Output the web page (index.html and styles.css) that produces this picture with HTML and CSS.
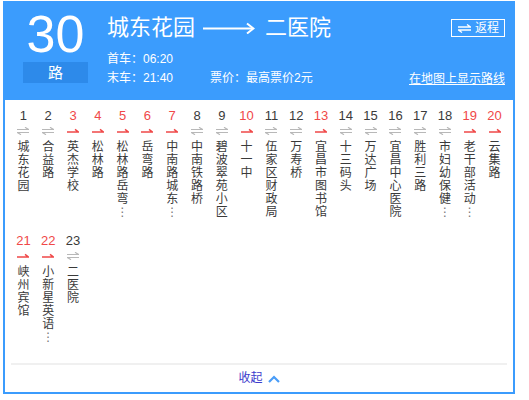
FILE: index.html
```html
<!DOCTYPE html>
<html lang="zh-CN">
<head>
<meta charset="utf-8">
<title>30路</title>
<link rel="stylesheet" href="styles.css">
</head>
<body>
<div class="card">
  <div class="header">
    <div class="route-num">
      <div class="num">30</div>
      <div class="lu">路</div>
    </div>
    <div class="route-info">
      <div class="title">
        <span>城东花园</span>
        <svg class="long-arrow" width="52" height="12" viewBox="0 0 52 12"><path d="M0 6.5H50" stroke="#fff" stroke-width="2"/><path d="M44 1.5L50.5 6.5L44 11.5" fill="none" stroke="#fff" stroke-width="2"/></svg>
        <span>二医院</span>
      </div>
      <div class="info-line">首车：06:20</div>
      <div class="info-line">
        <span class="first-col">末车：21:40</span>
        <span>票价：最高票价2元</span>
      </div>
    </div>
    <div class="route-actions">
      <a class="back-btn" href="#">
        <svg width="13" height="9" viewBox="0 0 13 9"><path d="M0 3H12.5L9 0.5" fill="none" stroke="#fff" stroke-width="1.3"/><path d="M13 6H0.5L4 8.5" fill="none" stroke="#fff" stroke-width="1.3"/></svg>
        <span>返程</span>
      </a>
      <a class="map-link" href="#">在地图上显示路线</a>
    </div>
  </div>

  <div class="stops">
    <div class="stop"><div class="no">1</div><svg class="ar" width="12" height="8" viewBox="0 0 12 8"><path d="M0 2.5H11.5L8 0.3M12 5.5H0.5L4 7.7" fill="none" stroke="#b8b8b8" stroke-width="1.2"/></svg><div class="nm">城东花园</div></div>
    <div class="stop"><div class="no">2</div><svg class="ar" width="12" height="8" viewBox="0 0 12 8"><path d="M0 2.5H11.5L8 0.3M12 5.5H0.5L4 7.7" fill="none" stroke="#b8b8b8" stroke-width="1.2"/></svg><div class="nm">合益路</div></div>
    <div class="stop red"><div class="no">3</div><svg class="ar" width="12" height="8" viewBox="0 0 12 8"><path d="M0 5H11.5L8 2.3" fill="none" stroke="#f04848" stroke-width="1.5"/></svg><div class="nm">英杰学校</div></div>
    <div class="stop red"><div class="no">4</div><svg class="ar" width="12" height="8" viewBox="0 0 12 8"><path d="M0 5H11.5L8 2.3" fill="none" stroke="#f04848" stroke-width="1.5"/></svg><div class="nm">松林路</div></div>
    <div class="stop red"><div class="no">5</div><svg class="ar" width="12" height="8" viewBox="0 0 12 8"><path d="M0 5H11.5L8 2.3" fill="none" stroke="#f04848" stroke-width="1.5"/></svg><div class="nm">松林路岳弯<span class="ell">⋮</span></div></div>
    <div class="stop red"><div class="no">6</div><svg class="ar" width="12" height="8" viewBox="0 0 12 8"><path d="M0 5H11.5L8 2.3" fill="none" stroke="#f04848" stroke-width="1.5"/></svg><div class="nm">岳弯路</div></div>
    <div class="stop red"><div class="no">7</div><svg class="ar" width="12" height="8" viewBox="0 0 12 8"><path d="M0 5H11.5L8 2.3" fill="none" stroke="#f04848" stroke-width="1.5"/></svg><div class="nm">中南路城东<span class="ell">⋮</span></div></div>
    <div class="stop"><div class="no">8</div><svg class="ar" width="12" height="8" viewBox="0 0 12 8"><path d="M0 2.5H11.5L8 0.3M12 5.5H0.5L4 7.7" fill="none" stroke="#b8b8b8" stroke-width="1.2"/></svg><div class="nm">中南铁路桥</div></div>
    <div class="stop"><div class="no">9</div><svg class="ar" width="12" height="8" viewBox="0 0 12 8"><path d="M0 2.5H11.5L8 0.3M12 5.5H0.5L4 7.7" fill="none" stroke="#b8b8b8" stroke-width="1.2"/></svg><div class="nm">碧波翠苑小区</div></div>
    <div class="stop red"><div class="no">10</div><svg class="ar" width="12" height="8" viewBox="0 0 12 8"><path d="M0 5H11.5L8 2.3" fill="none" stroke="#f04848" stroke-width="1.5"/></svg><div class="nm">十一中</div></div>
    <div class="stop"><div class="no">11</div><svg class="ar" width="12" height="8" viewBox="0 0 12 8"><path d="M0 2.5H11.5L8 0.3M12 5.5H0.5L4 7.7" fill="none" stroke="#b8b8b8" stroke-width="1.2"/></svg><div class="nm">伍家区财政局</div></div>
    <div class="stop"><div class="no">12</div><svg class="ar" width="12" height="8" viewBox="0 0 12 8"><path d="M0 2.5H11.5L8 0.3M12 5.5H0.5L4 7.7" fill="none" stroke="#b8b8b8" stroke-width="1.2"/></svg><div class="nm">万寿桥</div></div>
    <div class="stop red"><div class="no">13</div><svg class="ar" width="12" height="8" viewBox="0 0 12 8"><path d="M0 5H11.5L8 2.3" fill="none" stroke="#f04848" stroke-width="1.5"/></svg><div class="nm">宜昌市图书馆</div></div>
    <div class="stop"><div class="no">14</div><svg class="ar" width="12" height="8" viewBox="0 0 12 8"><path d="M0 2.5H11.5L8 0.3M12 5.5H0.5L4 7.7" fill="none" stroke="#b8b8b8" stroke-width="1.2"/></svg><div class="nm">十三码头</div></div>
    <div class="stop"><div class="no">15</div><svg class="ar" width="12" height="8" viewBox="0 0 12 8"><path d="M0 2.5H11.5L8 0.3M12 5.5H0.5L4 7.7" fill="none" stroke="#b8b8b8" stroke-width="1.2"/></svg><div class="nm">万达广场</div></div>
    <div class="stop"><div class="no">16</div><svg class="ar" width="12" height="8" viewBox="0 0 12 8"><path d="M0 2.5H11.5L8 0.3M12 5.5H0.5L4 7.7" fill="none" stroke="#b8b8b8" stroke-width="1.2"/></svg><div class="nm">宜昌中心医院</div></div>
    <div class="stop"><div class="no">17</div><svg class="ar" width="12" height="8" viewBox="0 0 12 8"><path d="M0 2.5H11.5L8 0.3M12 5.5H0.5L4 7.7" fill="none" stroke="#b8b8b8" stroke-width="1.2"/></svg><div class="nm">胜利三路</div></div>
    <div class="stop"><div class="no">18</div><svg class="ar" width="12" height="8" viewBox="0 0 12 8"><path d="M0 2.5H11.5L8 0.3M12 5.5H0.5L4 7.7" fill="none" stroke="#b8b8b8" stroke-width="1.2"/></svg><div class="nm">市妇幼保健<span class="ell">⋮</span></div></div>
    <div class="stop red"><div class="no">19</div><svg class="ar" width="12" height="8" viewBox="0 0 12 8"><path d="M0 5H11.5L8 2.3" fill="none" stroke="#f04848" stroke-width="1.5"/></svg><div class="nm">老干部活动<span class="ell">⋮</span></div></div>
    <div class="stop red"><div class="no">20</div><svg class="ar" width="12" height="8" viewBox="0 0 12 8"><path d="M0 5H11.5L8 2.3" fill="none" stroke="#f04848" stroke-width="1.5"/></svg><div class="nm">云集路</div></div>
    <div class="stop red"><div class="no">21</div><svg class="ar" width="12" height="8" viewBox="0 0 12 8"><path d="M0 5H11.5L8 2.3" fill="none" stroke="#f04848" stroke-width="1.5"/></svg><div class="nm">峡州宾馆</div></div>
    <div class="stop red"><div class="no">22</div><svg class="ar" width="12" height="8" viewBox="0 0 12 8"><path d="M0 5H11.5L8 2.3" fill="none" stroke="#f04848" stroke-width="1.5"/></svg><div class="nm">小新星英语<span class="ell">⋮</span></div></div>
    <div class="stop"><div class="no">23</div><svg class="ar" width="12" height="8" viewBox="0 0 12 8"><path d="M0 2.5H11.5L8 0.3M12 5.5H0.5L4 7.7" fill="none" stroke="#b8b8b8" stroke-width="1.2"/></svg><div class="nm">二医院</div></div>
  </div>

  <div class="divider"></div>
  <div class="footer">
    <a class="collapse" href="#">收起<svg width="12" height="8" viewBox="0 0 12 8"><path d="M1 7L6 2L11 7" fill="none" stroke="#4a9df8" stroke-width="2.2"/></svg></a>
  </div>
</div>
</body>
</html>
```

FILE: styles.css
```css
html, body {
  margin: 0;
  padding: 0;
  background: #fff;
}
body {
  padding: 1px 0 0 3px;
  font-family: "Liberation Sans", "Noto Sans CJK SC", sans-serif;
  color: #333;
}
a {
  color: inherit;
  text-decoration: none;
}
.card {
  width: 508px;
  border: 2px solid #3b9cfd;
}
.header {
  background: #3b9cfd;
  height: 97px;
  display: flex;
  align-items: flex-start;
  color: #fff;
  padding: 0 8px 0 18px;
  box-sizing: border-box;
}
.route-num {
  width: 65px;
  display: flex;
  flex-direction: column;
  align-items: center;
  padding-top: 5px;
}
.num {
  font-size: 52px;
  line-height: 52px;
  height: 52px;
}
.lu {
  margin-top: 2px;
  width: 65px;
  height: 21px;
  line-height: 21px;
  text-align: center;
  background: #2d8aea;
  font-size: 15px;
}
.route-info {
  flex: 1;
  margin-left: 19px;
  padding-top: 14px;
}
.title {
  display: flex;
  align-items: center;
  font-size: 22px;
  line-height: 22px;
  height: 22px;
}
.long-arrow {
  margin: 0 10px 0 8px;
}
.info-line {
  font-size: 12px;
  line-height: 19px;
  height: 19px;
  display: flex;
}
.title + .info-line {
  margin-top: 11px;
}
.first-col {
  width: 103px;
}
.route-actions {
  display: flex;
  flex-direction: column;
  align-items: flex-end;
  padding-top: 16px;
}
.back-btn {
  display: flex;
  align-items: center;
  gap: 4px;
  height: 18px;
  box-sizing: border-box;
  border: 1px solid #fff;
  padding: 0 5px 0 6px;
  font-size: 12px;
  line-height: 16px;
}
.map-link {
  margin-top: 33px;
  font-size: 12px;
  line-height: 19px;
  text-decoration: underline;
}
.stops {
  display: grid;
  grid-template-columns: repeat(20, 1fr);
  row-gap: 14px;
  padding: 8px 6px 0;
}
.stop {
  display: flex;
  flex-direction: column;
  align-items: center;
}
.no {
  font-size: 13px;
  line-height: 16px;
  height: 16px;
  color: #3a3a3a;
}
.red .no {
  color: #f04848;
}
.ar {
  display: block;
  margin-top: 3px;
}
.nm {
  margin-top: 6px;
  width: 12px;
  font-size: 12px;
  line-height: 13px;
  color: #3a3a3a;
  word-break: break-all;
  line-break: anywhere;
  text-align: center;
}
.ell {
  display: block;
  height: 13px;
  font-family: "DejaVu Sans", sans-serif;
  font-size: 12px;
  line-height: 13px;
  color: #777;
}
.divider {
  margin: 19px 6px 0;
  height: 2px;
  background: #f0f0f0;
}
.footer {
  height: 27px;
  display: flex;
  justify-content: center;
  align-items: center;
}
.collapse {
  display: flex;
  align-items: center;
  gap: 5px;
  font-size: 12px;
  line-height: 27px;
  color: #3c3ccc;
}
```
